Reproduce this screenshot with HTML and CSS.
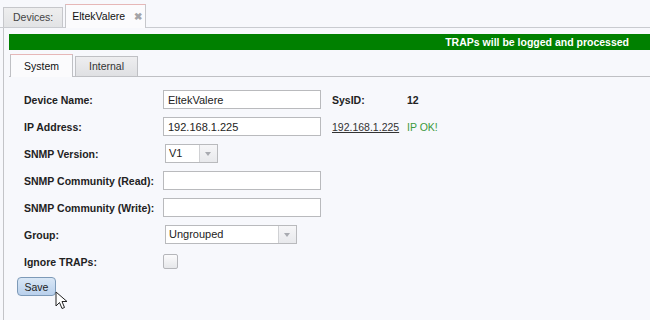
FILE: index.html
```
<!DOCTYPE html>
<html lang="en">

<head>
  <meta charset="UTF-8" />
  <title>EltekValere</title>
  <link rel="stylesheet" href="styles.css">
</head>

<body>
  <div class="tabs">
    <div class="tab">Devices:</div>
    <div class="tab active">EltekValere <span class="close">&#10006;</span></div>
  </div>

  <div class="panel">
    <div class="banner">TRAPs will be logged and processed</div>

    <div class="subtabs">
      <div class="subtab active">System</div>
      <div class="subtab">Internal</div>
    </div>

    <div class="form">
      <label>Device Name:</label>
      <div><input type="text" class="text" value="EltekValere" /></div>
      <label>SysID:</label>
      <div class="value">12</div>

      <label>IP Address:</label>
      <div><input type="text" class="text" value="192.168.1.225" /></div>
      <a class="link" href="#">192.168.1.225</a>
      <div class="ok">IP OK!</div>

      <label>SNMP Version:</label>
      <div class="span3">
        <div class="select small"><span>V1</span><i class="arrow"></i></div>
      </div>

      <label>SNMP Community (Read):</label>
      <div class="span3"><input type="text" class="text" /></div>

      <label>SNMP Community (Write):</label>
      <div class="span3"><input type="text" class="text" /></div>

      <label>Group:</label>
      <div class="span3">
        <div class="select wide"><span>Ungrouped</span><i class="arrow"></i></div>
      </div>

      <label>Ignore TRAPs:</label>
      <div class="span3"><span class="check"></span></div>
    </div>

    <button class="save">Save</button>
  </div>

  <svg class="cursor" width="14" height="20" viewBox="0 0 14 20">
    <path d="M1 1 L1 15 L4.5 11.5 L7 17.5 L9.5 16.5 L7 10.5 L12 10.5 Z" fill="#fff" stroke="#222" stroke-width="1" stroke-linejoin="round" />
  </svg>
</body>

</html>
```

FILE: styles.css
```
body {
  margin: 0;
  background: #f7f8fc;
  font-family: 'Liberation Sans', Arial, sans-serif;
  font-size: 10.5px;
  color: #222;
  height: 320px;
  overflow: hidden;
  position: relative;
}

.tabs {
  display: flex;
  align-items: flex-end;
  gap: 2px;
  height: 28px;
  padding-left: 3px;
  border-bottom: 1px solid #c9cbd0;
  box-sizing: border-box;
}

.tab {
  height: 19px;
  line-height: 19px;
  padding: 0 9px;
  border: 1px solid #c6c7cb;
  border-bottom: none;
  background: linear-gradient(#eeeeef, #e2e3e5);
  color: #444;
  font-size: 10.5px;
}

.tab.active {
  height: 23px;
  line-height: 22px;
  margin-bottom: -1px;
  background: #fbfbfd;
  border-top: 1px solid #e6b7b7;
  color: #111;
  padding: 0 3px 0 6px;
}

.close {
  color: #a4a4a8;
  font-size: 10px;
  font-weight: bold;
  margin-left: 6px;
}

.panel {
  margin-left: 3px;
  border-left: 1px solid #c3c4c8;
  height: 292px;
  padding: 6px 0 0 5px;
}

.banner {
  background: #008000;
  color: #fff;
  font-weight: bold;
  height: 16px;
  line-height: 16px;
  text-align: right;
  padding-right: 21px;
}

.subtabs {
  display: flex;
  align-items: flex-end;
  gap: 2px;
  height: 27px;
  padding-left: 1px;
  border-bottom: 1px solid #bfc0c4;
  box-sizing: border-box;
}

.subtab {
  width: 61px;
  height: 19px;
  line-height: 19px;
  text-align: center;
  border: 1px solid #bfc0c4;
  border-bottom: none;
  background: linear-gradient(#eeeef0, #dfe0e3);
  color: #333;
}

.subtab.active {
  height: 22px;
  line-height: 22px;
  margin-bottom: -1px;
  background: #fbfbfd;
  border-top: 1px solid #e6b7b7;
  color: #111;
}

.form {
  display: grid;
  grid-template-columns: 139px 169px 75px auto;
  grid-auto-rows: 27px;
  align-items: center;
  padding: 9px 0 0 15px;
}

label {
  font-weight: bold;
  color: #222;
}

.span3 {
  grid-column: 2 / span 3;
}

.text {
  width: 158px;
  height: 19px;
  box-sizing: border-box;
  border: 1px solid #b9babd;
  background: #fff;
  font-family: inherit;
  font-size: 11px;
  padding: 0 4px;
  color: #222;
  margin: 0;
}

.value {
  font-weight: bold;
}

.link {
  color: #333;
  text-decoration: underline;
}

.ok {
  color: #3c9a3c;
}

.select {
  display: flex;
  height: 19px;
  box-sizing: border-box;
  border: 1px solid #b9babd;
  background: #fff;
  margin-left: 2px;
}

.select span {
  flex: 1;
  line-height: 17px;
  padding-left: 3px;
  font-size: 11px;
}

.select.small {
  width: 53px;
}

.select.wide {
  width: 132px;
}

.arrow {
  width: 17px;
  border-left: 1px solid #d0d1d4;
  background: linear-gradient(#f6f6f8, #e8e9ec);
  position: relative;
}

.arrow::after {
  content: "";
  position: absolute;
  left: 5px;
  top: 7px;
  border-left: 3px solid transparent;
  border-right: 3px solid transparent;
  border-top: 4px solid #a8aab0;
}

.check {
  display: block;
  width: 13px;
  height: 13px;
  border: 1px solid #b5b6ba;
  background: linear-gradient(#fbfbfc, #e6e7ea);
  border-radius: 2px;
}

.save {
  margin: 2px 0 0 8px;
  height: 19px;
  width: 39px;
  padding: 0;
  border: 1px solid #7d9ab8;
  border-radius: 4px;
  background: linear-gradient(#d9e7f6, #b9d0ec);
  font-family: inherit;
  font-size: 10.5px;
  color: #222;
}

.cursor {
  position: absolute;
  left: 55px;
  top: 291px;
}
```
